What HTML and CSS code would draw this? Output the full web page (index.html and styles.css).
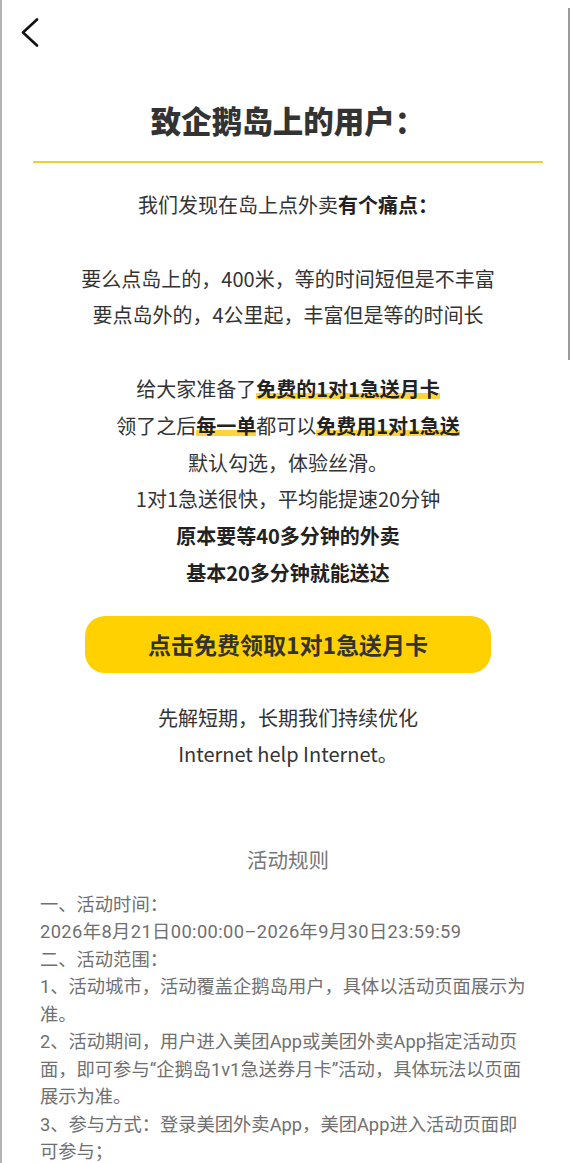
FILE: index.html
```html
<!DOCTYPE html>
<html lang="zh-CN">
<head>
<meta charset="utf-8">
<title>致企鹅岛上的用户</title>
<link rel="stylesheet" href="styles.css">
</head>
<body>
<div class="screen">
  <div class="scroll-indicator"></div>
  <header class="nav">
    <svg class="back" width="22" height="32" viewBox="0 0 22 32" aria-label="返回">
      <polyline points="17,1.5 3,14.5 17,27.5" fill="none" stroke="#111" stroke-width="2.6" stroke-linecap="round" stroke-linejoin="round"/>
    </svg>
  </header>
  <main class="page">
    <h1 class="title">致企鹅岛上的用户：</h1>
    <section class="letter">
      <p>我们发现在岛上点外卖<b>有个痛点：</b></p>
      <p>要么点岛上的，400米，等的时间短但是不丰富<br>要点岛外的，4公里起，丰富但是等的时间长</p>
      <p>给大家准备了<b class="mark">免费的1对1急送月卡</b><br>领了之后<b class="mark">每一单</b>都可以<b class="mark">免费用1对1急送</b><br>默认勾选，体验丝滑。<br>1对1急送很快，平均能提速20分钟<br><b>原本要等40多分钟的外卖</b><br><b>基本20多分钟就能送达</b></p>
    </section>
    <button class="cta" type="button">点击免费领取1对1急送月卡</button>
    <p class="closing">先解短期，长期我们持续优化<br>Internet help Internet。</p>
    <h2 class="rules-title">活动规则</h2>
    <div class="rules">
      <p>一、活动时间：</p>
      <p class="num">2026年8月21日00:00:00–2026年9月30日23:59:59</p>
      <p>二、活动范围：</p>
      <p>1、活动城市，活动覆盖企鹅岛用户，具体以活动页面展示为准。</p>
      <p>2、活动期间，用户进入美团App或美团外卖App指定活动页面，即可参与“企鹅岛1v1急送券月卡”活动，具体玩法以页面展示为准。</p>
      <p>3、参与方式：登录美团外卖App，美团App进入活动页面即可参与；</p>
    </div>
  </main>
</div>
</body>
</html>
```
FILE: styles.css
```css
html, body {
  margin: 0;
  padding: 0;
  background: #fff;
}
body {
  font-family: "Noto Sans CJK SC", "Noto Sans", sans-serif;
  color: #333;
}
.screen {
  position: relative;
  min-height: 1163px;
  border-left: 2px solid #b4b4b4;
  overflow: hidden;
}
.scroll-indicator {
  position: absolute;
  right: 0;
  top: 8px;
  width: 2px;
  height: 352px;
  background: #9a9a9a;
}
.nav {
  height: 66px;
  padding: 18px 0 0 18px;
  box-sizing: border-box;
}
.back {
  display: block;
}
.page {
  padding: 0 27px 0 31px;
}
.title {
  margin: 34px 0 0;
  padding-bottom: 21px;
  height: 40px;
  line-height: 40px;
  font-size: 30.5px;
  font-weight: 900;
  text-align: center;
  color: #333;
  border-bottom: 2px solid #f2cd2c;
}
.letter {
  margin-top: 24px;
  text-align: center;
}
.letter p {
  margin: 0 0 36.8px;
  font-size: 20px;
  line-height: 36.8px;
}
.letter p:last-child {
  margin-bottom: 0;
}
.letter b, .closing b {
  font-weight: 700;
  color: #222;
}
.mark {
  background-image: linear-gradient(#ffd43a, #ffd43a);
  background-repeat: no-repeat;
  background-size: 100% 6px;
  background-position: 0 19px;
}
.cta {
  display: block;
  width: 406px;
  height: 57px;
  margin: 24px auto 0;
  border: 0;
  border-radius: 20px;
  background: #ffd100;
  color: #333;
  font-family: inherit;
  font-size: 23px;
  font-weight: 700;
  cursor: pointer;
}
.closing {
  margin: 27px 0 0;
  text-align: center;
  font-size: 20px;
  line-height: 36px;
  color: #333;
}
.rules-title {
  margin: 72px 0 0;
  text-align: center;
  font-size: 20.5px;
  line-height: 30px;
  font-weight: 400;
  color: #777;
}
.rules {
  margin-top: 17px;
  padding: 0 8px 0 7px;
  font-family: Roboto, "Noto Sans CJK SC", sans-serif;
  font-size: 18.3px;
  line-height: 27.5px;
  color: #707070;
}
.rules p {
  margin: 0;
}
.rules .num {
  letter-spacing: 0.4px;
}
```
